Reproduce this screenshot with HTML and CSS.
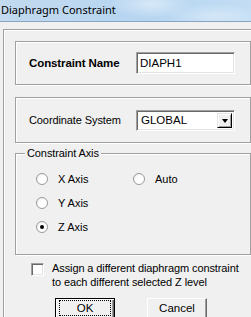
FILE: index.html
```html
<!DOCTYPE html>
<html lang="en">
<head>
  <meta charset="UTF-8" />
  <title>Diaphragm Constraint</title>
  <link rel="stylesheet" href="styles.css">
</head>
<body>
  <div class="dialog">
    <div class="titlebar">Diaphragm Constraint</div>
    <div class="frame">
      <div class="group name-group">
        <label class="bold">Constraint Name</label>
        <div class="textbox">DIAPH1</div>
      </div>
      <div class="group coord-group">
        <label>Coordinate System</label>
        <div class="combo">
          <span class="combo-val">GLOBAL</span>
          <span class="combo-btn"><span class="arrow"></span></span>
        </div>
      </div>
      <div class="group axis-group">
        <div class="legend">Constraint Axis</div>
        <div class="axis-grid">
          <div class="radio-row"><span class="radio"></span>X Axis</div>
          <div class="radio-row"><span class="radio"></span>Auto</div>
          <div class="radio-row"><span class="radio"></span>Y Axis</div>
          <div></div>
          <div class="radio-row"><span class="radio on"></span>Z Axis</div>
        </div>
      </div>
      <div class="check-row">
        <span class="checkbox"></span>
        <span class="check-text">Assign a different diaphragm constraint<br>to each different selected Z level</span>
      </div>
      <div class="buttons">
        <div class="btn default"><span class="focus">OK</span></div>
        <div class="btn">Cancel</div>
      </div>
    </div>
  </div>
</body>
</html>
```
FILE: styles.css
```css
body {
  margin: 0;
  width: 251px;
  height: 317px;
  overflow: hidden;
  background: #f0f0f0;
  font-family: "Liberation Sans", Arial, sans-serif;
  font-size: 11px;
  color: #000;
}
.dialog { width: 251px; overflow: hidden; }
.titlebar {
  height: 21px;
  padding-left: 1px;
  line-height: 20px;
  font-family: "Noto Sans", sans-serif;
  font-size: 11px;
  background:
    radial-gradient(ellipse 40px 14px at 150px 4px, rgba(255,255,255,0.45), transparent),
    radial-gradient(ellipse 50px 12px at 215px 16px, rgba(255,255,255,0.35), transparent),
    linear-gradient(to right, #c3daef, #b6d5f1 55%, #c2ddf4);
  border-bottom: 1px solid #8aa5bf;
}
.frame {
  margin: 7px 0 0 3px;
  padding: 11px 0 0 11px;
  border-top: 1px solid #a0a0a0;
  border-left: 1px solid #a0a0a0;
  box-shadow: inset 1px 1px 0 #fff;
}
.group {
  border: 1px solid #a0a0a0;
  box-shadow: inset 1px 1px 0 #fff, 1px 1px 0 #fff;
  display: flex;
  align-items: center;
  padding-left: 13px;
  box-sizing: border-box;
  width: 236px;
}
.name-group { height: 44px; }
.coord-group { height: 46px; margin-top: 12px; }
.group label { width: 107px; letter-spacing: -0.1px; }
.bold { font-weight: bold; font-size: 11.5px; }
.textbox {
  width: 99px;
  height: 22px;
  box-sizing: border-box;
  background: #fff;
  border-top: 1px solid #a0a0a0;
  border-left: 1px solid #a0a0a0;
  border-bottom: 1px solid #fff;
  border-right: 1px solid #fff;
  box-shadow: inset 1px 1px 0 #696969, inset -1px -1px 0 #e3e3e3;
  padding: 3px 0 0 3px;
  font-size: 11.5px;
  line-height: 15px;
}
.combo {
  width: 99px;
  height: 21px;
  box-sizing: border-box;
  background: #fff;
  border-top: 1px solid #a0a0a0;
  border-left: 1px solid #a0a0a0;
  border-bottom: 1px solid #fff;
  border-right: 1px solid #fff;
  box-shadow: inset 1px 1px 0 #696969, inset -1px -1px 0 #e3e3e3;
  display: flex;
  padding: 2px;
  font-size: 11.5px;
}
.combo-val { flex: 1; padding-left: 2px; line-height: 15px; }
.combo-btn {
  width: 15px;
  height: 15px;
  box-sizing: border-box;
  background: #f0f0f0;
  border-top: 1px solid #e3e3e3;
  border-left: 1px solid #e3e3e3;
  border-right: 1px solid #000;
  border-bottom: 1px solid #000;
  box-shadow: inset 1px 1px 0 #fff, inset -1px -1px 0 #a0a0a0;
  display: flex;
  align-items: center;
  justify-content: center;
}
.arrow {
  border-left: 3.5px solid transparent;
  border-right: 3.5px solid transparent;
  border-top: 4px solid #000;
  margin-top: 1px;
}
.axis-group {
  margin-top: 10px;
  height: 102px;
  display: block;
  padding: 0 0 0 20px;
}
.legend {
  margin: -7px 0 0 -11px;
  padding: 0 2px;
  width: fit-content;
  background: #f0f0f0;
  line-height: 13px;
  letter-spacing: -0.1px;
}
.axis-grid {
  display: grid;
  grid-template-columns: 97px auto;
  grid-auto-rows: 24px;
  margin-top: 7px;
}
.radio-row {
  display: flex;
  align-items: center;
}
.radio {
  width: 12px;
  height: 12px;
  box-sizing: border-box;
  border-radius: 50%;
  border: 1px solid #9a9a9a;
  background: radial-gradient(circle at 60% 60%, #fff 45%, #e6e6e6);
  margin-right: 10px;
  display: flex;
  align-items: center;
  justify-content: center;
}
.radio.on::after {
  content: "";
  width: 4px;
  height: 4px;
  border-radius: 50%;
  background: #000;
}
.check-row {
  display: flex;
  margin: 8px 0 0 16px;
}
.checkbox {
  width: 13px;
  height: 13px;
  box-sizing: border-box;
  background: #fff;
  border-top: 1px solid #a0a0a0;
  border-left: 1px solid #a0a0a0;
  border-bottom: 1px solid #fff;
  border-right: 1px solid #fff;
  box-shadow: inset 1px 1px 0 #696969, inset -1px -1px 0 #e3e3e3;
  margin-right: 8px;
}
.check-text {
  line-height: 14px;
  margin-top: -2px;
  letter-spacing: -0.1px;
}
.buttons {
  display: flex;
  gap: 32px;
  margin: 9px 0 0 40px;
}
.btn {
  width: 60px;
  height: 23px;
  box-sizing: border-box;
  border-top: 1px solid #fff;
  border-left: 1px solid #fff;
  border-right: 1px solid #696969;
  border-bottom: 1px solid #696969;
  box-shadow: inset -1px -1px 0 #a0a0a0;
  display: flex;
  align-items: center;
  justify-content: center;
  font-size: 11.5px;
  padding-bottom: 3px;
}
.btn.default {
  border: 1px solid #000;
  box-shadow: inset 1px 1px 0 #fff, inset -1px -1px 0 #696969, inset -2px -2px 0 #a0a0a0;
}
.focus {
  width: 50px;
  height: 14px;
  border: 1px dotted #000;
  text-align: center;
  line-height: 14px;
}
```
